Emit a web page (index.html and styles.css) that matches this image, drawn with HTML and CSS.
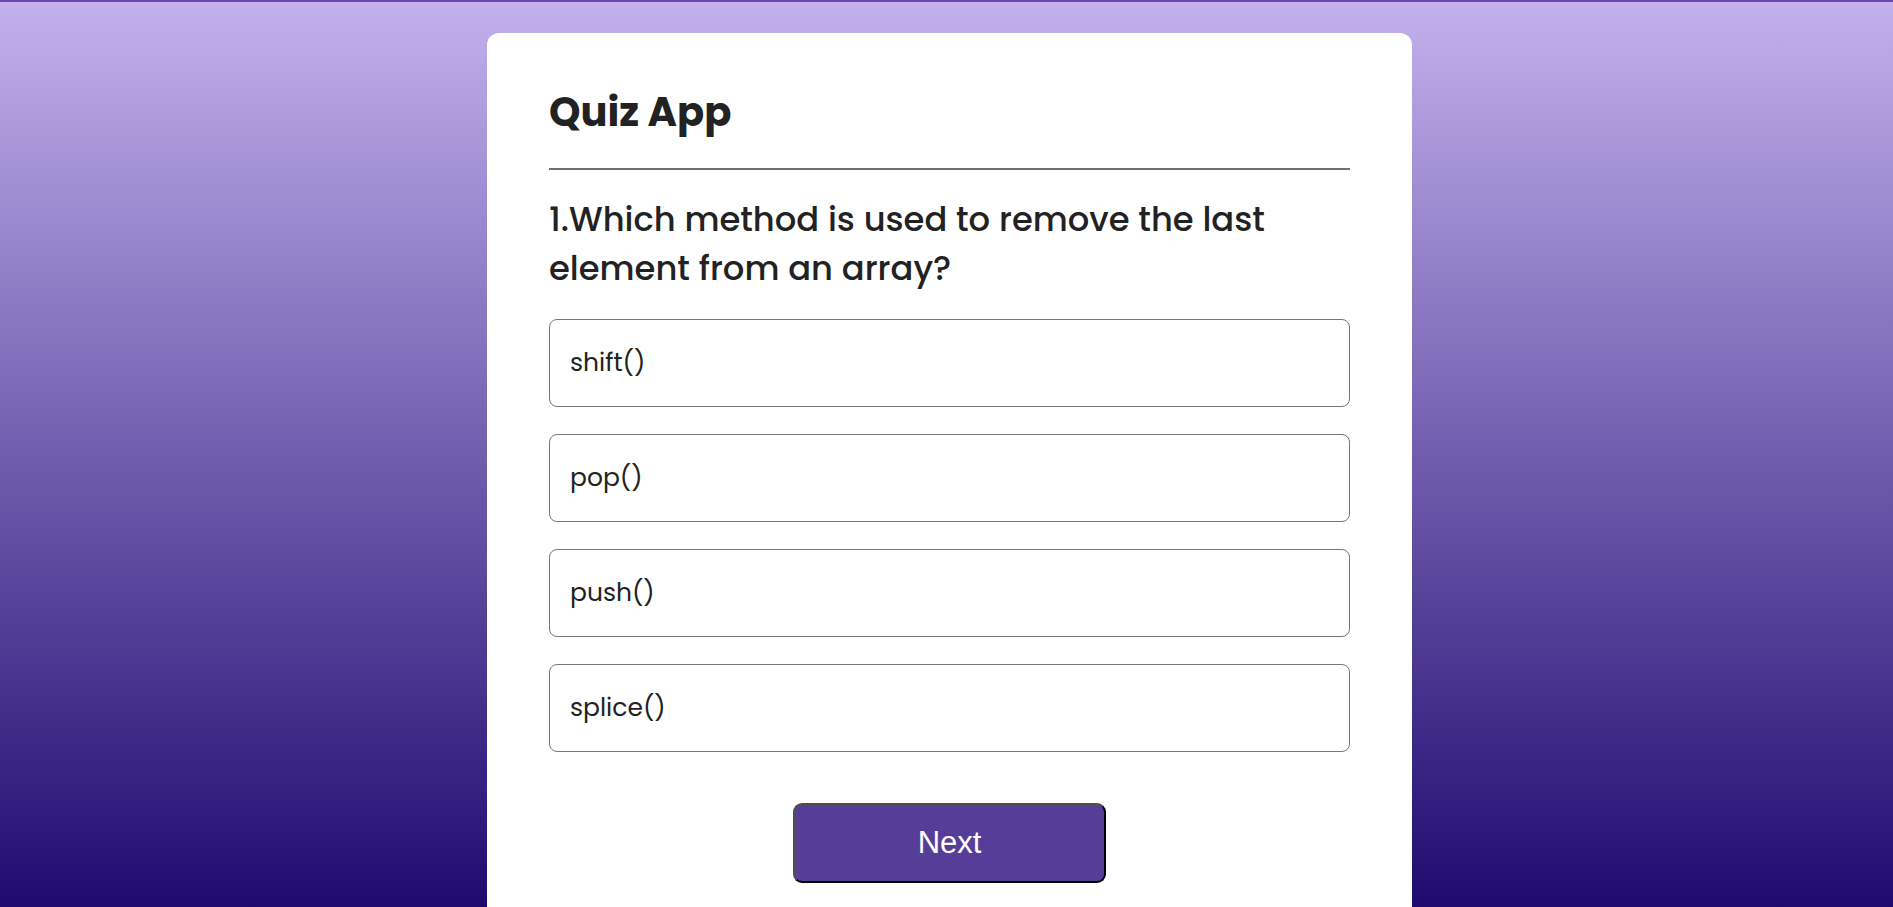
FILE: index.html
```html
<!DOCTYPE html>
<html lang="en">
<head>
<meta charset="utf-8">
<title>Quiz App</title>
<link rel="stylesheet" href="styles.css">
</head>
<body>
<div class="page">
  <main class="app">
    <h1 class="title">Quiz App</h1>
    <div class="quiz">
      <h2 class="question">1.Which method is used to remove the last element from an array?</h2>
      <div class="answers">
        <button class="answer">shift()</button>
        <button class="answer">pop()</button>
        <button class="answer">push()</button>
        <button class="answer">splice()</button>
      </div>
      <button class="next-btn">Next</button>
    </div>
  </main>
</div>
</body>
</html>
```

FILE: styles.css
```css
* {
  box-sizing: border-box;
}

html, body {
  margin: 0;
  padding: 0;
}

body {
  font-family: Poppins, Inter, "Noto Sans", sans-serif;
  color: #222;
}

.page {
  height: 100vh;
  overflow: hidden;
  border-top: 2px solid #6c47ad;
  background: linear-gradient(to bottom, #c3b0ec 0%, #200a70 100%);
  padding: 31px 0 0 6px;
}

.app {
  width: 925px;
  margin: 0 auto;
  background: #fff;
  border-radius: 12px;
  padding: 51px 62px 62px;
}

.title {
  margin: 0;
  font-size: 40px;
  font-weight: 700;
  line-height: 57px;
  padding-bottom: 27px;
  border-bottom: 2px solid #707070;
  color: #222;
}

.question {
  margin: 25px 0 0;
  font-size: 33.75px;
  font-weight: 500;
  line-height: 49px;
  color: #222;
}

.answers {
  display: flex;
  flex-direction: column;
  gap: 27px;
  margin-top: 26px;
}

.answer {
  display: flex;
  align-items: center;
  height: 88px;
  width: 100%;
  padding: 0 20px;
  background: #fff;
  border: 1px solid #777;
  border-radius: 8px;
  font-family: Poppins, Inter, "Noto Sans", sans-serif;
  font-size: 25px;
  font-weight: 400;
  color: #222;
  text-align: left;
}

.next-btn {
  display: block;
  width: 313px;
  height: 80px;
  margin: 51px auto 0;
  background: #563e98;
  color: #fff;
  font-family: "Liberation Sans", Arial, sans-serif;
  font-size: 31px;
  border-width: 2px;
  border-style: solid;
  border-color: #4e4e4e #000 #000 #4e4e4e;
  border-radius: 9px;
}
```
